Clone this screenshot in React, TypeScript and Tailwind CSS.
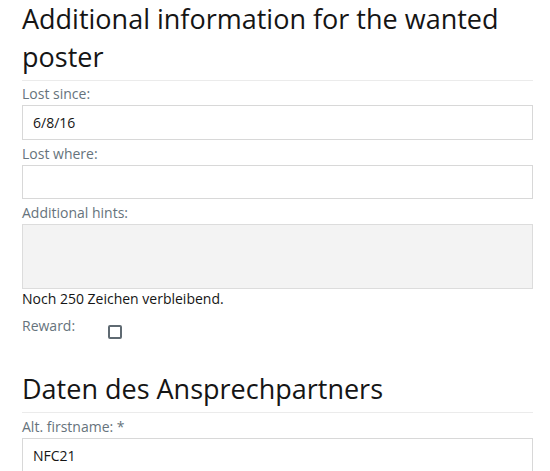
import React from "react";

function Label({ children }: { children: React.ReactNode }) {
  return (
    <div className="text-[14px] leading-[22px] text-[#66737c]">{children}</div>
  );
}

export default function App() {
  return (
    <div
      className="w-[550px] h-[471px] overflow-hidden bg-white pl-[22px] pr-[17px]"
      style={{ fontFamily: '"Open Sans", "Liberation Sans", sans-serif' }}
    >
      <h2 className="text-[27px] leading-[38px] text-[#151515] border-b border-[#ebebeb] pb-[4px]">
        Additional information for the wanted poster
      </h2>
      <div className="mt-[2px]">
        <Label>Lost since:</Label>
        <div className="h-[35px] border border-[#d8d8d8] bg-white px-[10px] flex items-center text-[14px] text-[#151515]">
          6/8/16
        </div>
      </div>
      <div className="mt-[3px]">
        <Label>Lost where:</Label>
        <div className="h-[34px] border border-[#d8d8d8] bg-white" />
      </div>
      <div className="mt-[3px]">
        <Label>Additional hints:</Label>
        <div className="h-[65px] border border-[#dcdcdc] bg-[#f3f3f3]" />
      </div>
      <div className="text-[14px] leading-[20px] text-[#151515]">
        Noch 250 Zeichen verbleibend.
      </div>
      <div className="flex items-start mt-[7px]">
        <div className="w-[86px] text-[14px] leading-[20px] text-[#66737c]">Reward:</div>
        <div className="mt-[9px] w-[14px] h-[14px] border-2 border-[#5f6a72] rounded-[2px]" />
      </div>
      <h2 className="mt-[30px] text-[27px] leading-[40px] text-[#151515] border-b border-[#ebebeb] pb-[3px]">
        Daten des Ansprechpartners
      </h2>
      <div className="mt-[3px]">
        <Label>Alt. firstname: *</Label>
        <div className="h-[35px] border border-[#d8d8d8] bg-white px-[10px] flex items-center text-[14px] text-[#151515]">
          NFC21
        </div>
      </div>
    </div>
  );
}
